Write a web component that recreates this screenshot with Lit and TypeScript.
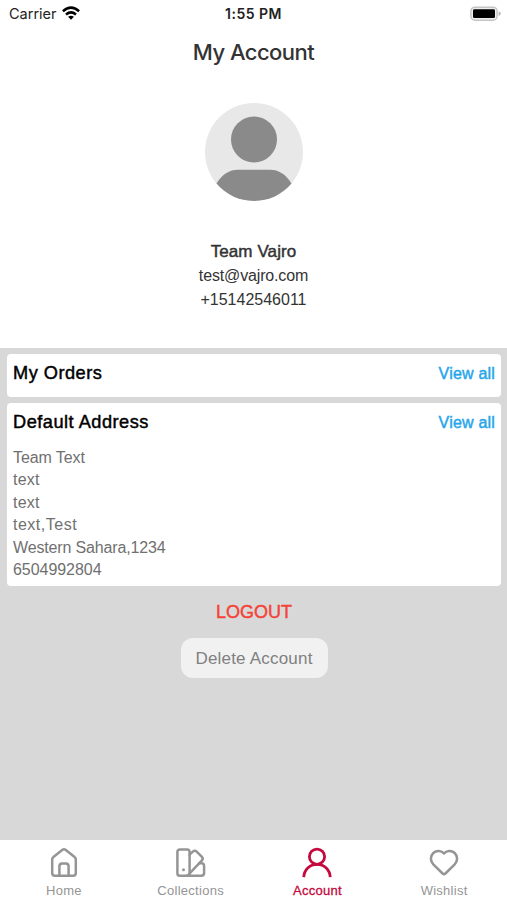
import { LitElement, html, css, svg } from "lit";
import { customElement } from "lit/decorators.js";
import { classMap } from "lit/directives/class-map.js";
import { styleMap } from "lit/directives/style-map.js";

const tabs = [
  {
    label: "Home",
    icon: svg`<path d="M4.2 13.4Q4.2 11.8 5.4 10.9L14.2 3.9Q16 2.6 17.8 3.9L26.6 10.9Q27.8 11.8 27.8 13.4V27Q27.8 29.8 25 29.8H7Q4.2 29.8 4.2 27Z"/><path d="M11.4 29.8V20.4Q11.4 17.6 14.2 17.6H17.8Q20.6 17.6 20.6 20.4V29.8"/>`,
  },
  {
    label: "Collections",
    icon: svg`<rect x="2.4" y="3.5" width="12.2" height="26.3" rx="2.6"/><path d="M14.6 8.6L17.8 5.6Q19.9 3.9 21.9 5.8L26.7 10.6Q28.7 12.7 26.7 14.7L13.7 28.4"/><path d="M24.3 17.3H26.3Q29.1 17.3 29.1 20V27.1Q29.1 29.8 26.3 29.8H11.8"/><circle class="dot" cx="8.5" cy="23.8" r="1.5"/>`,
  },
  {
    label: "Account",
    active: true,
    icon: svg`<circle cx="16" cy="10.7" r="7.6"/><path d="M2.8 31.1C3.1 23.7 8.7 18.4 16 18.4S28.9 23.7 29.2 31.1"/>`,
  },
  {
    label: "Wishlist",
    icon: svg`<path d="M16 7.5C13.7 4.5 8.5 3.9 5.3 7C2 10.3 2.2 15.2 5.3 18.3L14.6 27.5Q16 28.9 17.4 27.5L26.7 18.3C29.8 15.2 30 10.3 26.7 7C23.5 3.9 18.3 4.5 16 7.5Z"/>`,
  },
];

const address = [
  { text: "Team Text", tracking: -0.1 },
  { text: "text", tracking: 0.2 },
  { text: "text", tracking: 0.2 },
  { text: "text,Test", tracking: 0.5 },
  { text: "Western Sahara,1234", tracking: -0.15 },
  { text: "6504992804", tracking: -0.05 },
];

@customElement("app-root")
export class AppRoot extends LitElement {
  static styles = css`
    :host {
      display: flex;
      flex-direction: column;
      height: 900px;
      box-sizing: border-box;
      background: #d8d8d8;
      color: #333;
      font-family: "Liberation Sans", Arial, sans-serif;
      overflow: hidden;
    }
    * { box-sizing: border-box; }
    .top { height: 348px; background: #fff; display: flex; flex-direction: column; align-items: center; flex: none; }
    .status {
      width: 100%; height: 28px; padding: 0 6px 0 9px; display: grid;
      grid-template-columns: 1fr auto 1fr; align-items: center;
      font: 14.5px/28px Inter, sans-serif; color: #222;
    }
    .carrier { display: flex; align-items: center; gap: 5px; }
    .carrier svg { margin-top: -2px; }
    .time { font-weight: 600; font-size: 14px; letter-spacing: 0.5px; margin-right: 3px; }
    .battery { justify-self: end; margin-top: -2px; }
    .title { height: 48px; font: 500 22px/48px Inter, sans-serif; letter-spacing: -0.55px; color: #333; }
    .avatar { margin-top: 27px; width: 98px; height: 98px; flex: none; }
    .name { margin-top: 39px; font-size: 17px; line-height: 24px; letter-spacing: 0.1px; }
    .contact { font-size: 16px; line-height: 24px; }
    .email { letter-spacing: -0.15px; }
    .medium { -webkit-text-stroke: 0.45px currentColor; }
    .body { flex: 1; padding: 6px 6px 0 7px; display: flex; flex-direction: column; gap: 6px; }
    .card { background: #fff; border-radius: 4px; padding: 0 6px; }
    .orders { height: 43px; }
    .default { height: 183px; }
    .head { display: flex; justify-content: space-between; align-items: center; height: 39px; }
    .head h2 { margin: 0; font-size: 18.2px; font-weight: 400; letter-spacing: 0.5px; color: #000; }
    .link { font-size: 16px; letter-spacing: 0.2px; color: #26a5ea; }
    .lines { padding-top: 5px; font-size: 16px; line-height: 22.4px; color: #707070; }
    .actions { display: flex; flex-direction: column; align-items: center; }
    .logout { font-size: 18px; line-height: 24px; color: #f44336; margin-top: 8px; }
    .delete {
      margin-top: 14px; width: 147px; height: 40px; border-radius: 12px; background: #f1f1f1;
      color: #808080; font-size: 17px; line-height: 41px; letter-spacing: 0.2px; text-align: center; white-space: nowrap;
    }
    .tabs { height: 60px; background: #fff; display: grid; grid-template-columns: repeat(4, 1fr); flex: none; }
    .tab { display: flex; flex-direction: column; align-items: center; padding: 6px 0 0 1px; color: #959595; font-size: 13px; line-height: 16px; letter-spacing: 0.27px; }
    .tab svg { width: 32px; height: 32px; margin-bottom: 5px; fill: none; stroke: currentColor; stroke-width: 2.5; stroke-linecap: round; stroke-linejoin: round; overflow: visible; }
    .tab .dot { fill: currentColor; stroke: none; }
    .tab.active { color: #c3093d; }
    .tab.active svg { stroke-width: 2.8; stroke-linecap: butt; }
    .tab.active span { -webkit-text-stroke: 0.3px currentColor; }
  `;

  render() {
    return html`
      <header class="top">
        <div class="status">
          <div class="carrier">
            <span>Carrier</span>
            <svg width="18" height="14" viewBox="0 0 18 14" fill="none" stroke="#000" stroke-width="2.5">
              <path d="M0.9 5.2Q9 -2 17.1 5.2" /><path d="M4 8.5Q9 4.3 14 8.5" />
              <path d="M6.1 10.8Q9 8.6 11.9 10.8L9 13.8Z" fill="#000" stroke="none" />
            </svg>
          </div>
          <span class="time">1:55 PM</span>
          <svg class="battery" width="31" height="15" viewBox="0 0 31 15">
            <rect x="0.9" y="1.2" width="26.2" height="13" rx="4" fill="#eee" stroke="#c5c5c5" stroke-width="1.5" />
            <rect x="3" y="3.3" width="22" height="8.8" rx="1.4" fill="#000" />
            <path d="M28.6 5.2Q30.8 6 30.8 7.6T28.6 10Z" fill="#b5b5b5" />
          </svg>
        </div>
        <div class="title">My Account</div>
        <svg class="avatar" viewBox="0 0 98 98">
          <circle cx="49" cy="49" r="49" fill="#e8e8e8" />
          <circle cx="49" cy="36.4" r="23" fill="#8a8a8a" />
          <path d="M11.5 80.5Q20 66.8 33 66.8H65Q78 66.8 86.5 80.5A49 49 0 0 1 11.5 80.5Z" fill="#8a8a8a" />
        </svg>
        <div class="name medium">Team Vajro</div>
        <div class="contact email">test@vajro.com</div>
        <div class="contact">+15142546011</div>
      </header>
      <main class="body">
        <section class="card orders">
          <div class="head"><h2 class="medium">My Orders</h2><span class="link medium">View all</span></div>
        </section>
        <section class="card default">
          <div class="head"><h2 class="medium">Default Address</h2><span class="link medium">View all</span></div>
          <div class="lines">
            ${address.map((l) => html`<div style=${styleMap({ letterSpacing: `${l.tracking}px` })}>${l.text}</div>`)}
          </div>
        </section>
        <div class="actions">
          <div class="logout medium">LOGOUT</div>
          <div class="delete">Delete Account</div>
        </div>
      </main>
      <nav class="tabs">
        ${tabs.map(
          (t) => html`<div class=${classMap({ tab: true, active: !!t.active })}>
            <svg viewBox="0 0 32 32">${t.icon}</svg><span>${t.label}</span>
          </div>`
        )}
      </nav>
    `;
  }
}
